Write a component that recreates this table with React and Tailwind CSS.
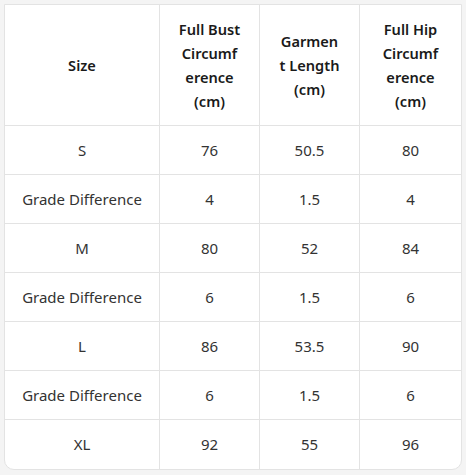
import React from "react";

const rows = [
  ["S", "76", "50.5", "80"],
  ["Grade Difference", "4", "1.5", "4"],
  ["M", "80", "52", "84"],
  ["Grade Difference", "6", "1.5", "6"],
  ["L", "86", "53.5", "90"],
  ["Grade Difference", "6", "1.5", "6"],
  ["XL", "92", "55", "96"],
];

const headers = [
  ["Size"],
  ["Full Bust", "Circumf", "erence", "(cm)"],
  ["Garmen", "t Length", "(cm)"],
  ["Full Hip", "Circumf", "erence", "(cm)"],
];

function App() {
  return (
    <div
      className="w-[466px] h-[475px] bg-[#f4f4f4] overflow-hidden"
      style={{ fontFamily: '"Noto Sans", "Open Sans", sans-serif' }}
    >
      <div className="ml-[4px] mt-[4px] w-[458px] bg-white border border-[#e3e3e3] rounded-b-[10px] overflow-hidden">
        <div className="grid grid-cols-[155px_100px_100px_101px]">
          {headers.map((h, i) => (
            <div
              key={i}
              className={`h-[121px] flex flex-col items-center justify-center text-[14.6px] leading-[24px] font-semibold text-[#1a1a1a] border-b border-[#e3e3e3] ${i < 3 ? "border-r" : ""}`}
            >
              {h.map((line, j) => (
                <span key={j}>{line}</span>
              ))}
            </div>
          ))}
          {rows.map((r, ri) =>
            r.map((c, ci) => (
              <div
                key={ri + "-" + ci}
                className={`h-[49px] flex items-center justify-center text-[15px] text-[#333] border-[#e3e3e3] ${ci < 3 ? "border-r" : ""} ${ri < rows.length - 1 ? "border-b" : ""}`}
              >
                {c}
              </div>
            ))
          )}
        </div>
      </div>
    </div>
  );
}

export default App;
